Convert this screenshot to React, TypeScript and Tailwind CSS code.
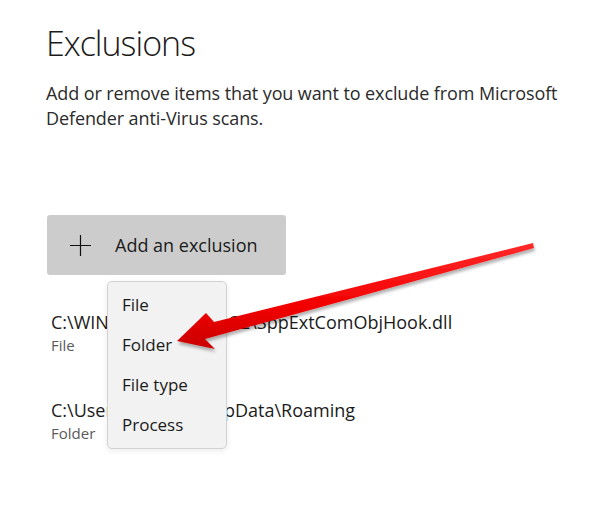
const font = { fontFamily: '"Open Sans", "Noto Sans", sans-serif' };

const exclusions = [
  { path: "C:\\WINDOWS\\System32\\SppExtComObjHook.dll", kind: "File" },
  { path: "C:\\Users\\Mahesh\\AppData\\Roaming", kind: "Folder" },
];

const menuItems = ["File", "Folder", "File type", "Process"];

function RedArrow() {
  return (
    <svg
      className="pointer-events-none absolute left-0 top-0"
      width="596"
      height="510"
      viewBox="0 0 596 510"
    >
      <defs>
        <linearGradient id="shaft" x1="0" y1="0" x2="0" y2="1">
          <stop offset="0" stopColor="#ff2a2a" />
          <stop offset="0.6" stopColor="#f20000" />
          <stop offset="1" stopColor="#c80000" />
        </linearGradient>
        <filter id="shadow" x="-10%" y="-10%" width="120%" height="130%">
          <feDropShadow dx="1" dy="3" stdDeviation="1.5" floodColor="#000" floodOpacity="0.3" />
        </filter>
      </defs>
      <polygon
        points="177,341 206,313 214,322 533,243 534,248 205,339 215,349"
        fill="url(#shaft)"
        filter="url(#shadow)"
      />
    </svg>
  );
}

export default function App() {
  return (
    <div className="relative h-[510px] w-[596px] overflow-hidden bg-white text-[#1b1b1b]" style={font}>
      <div className="pl-[46px] pt-[21px]">
        <h1 className="text-[34px] font-light leading-[44px] tracking-[-1px]">Exclusions</h1>
        <p className="mt-[16px] w-[540px] text-[18px] leading-[25px] tracking-[-0.1px] text-[#2b2b2b]">
          Add or remove items that you want to exclude from Microsoft Defender anti-Virus scans.
        </p>

        <button className="mt-[84px] ml-px flex h-[60px] w-[239px] items-center rounded-[3px] bg-[#cccccc] pl-[23px] text-left">
          <svg width="21" height="21" viewBox="0 0 21 21" className="shrink-0">
            <path d="M10.5 0 V21 M0 10.5 H21" stroke="#111" strokeWidth="1.2" />
          </svg>
          <span className="ml-[24px] text-[18px] text-[#1b1b1b]">Add an exclusion</span>
        </button>

        <div className="mt-[35px] flex flex-col gap-[42px] pl-[5px]">
          {exclusions.map((e) => (
            <div key={e.path} className="flex flex-col">
              <span className="text-[18px] leading-[24px] text-[#1b1b1b]">{e.path}</span>
              <span className="text-[15px] leading-[22px] text-[#5a5a5a]">{e.kind}</span>
            </div>
          ))}
        </div>
      </div>

      <div className="absolute left-[107px] top-[281px] flex w-[120px] flex-col rounded-[5px] border border-[#d2d2d2] bg-[#f2f2f2] py-[3px] shadow-[0_2px_6px_rgba(0,0,0,0.08)]">
        {menuItems.map((m) => (
          <div key={m} className="flex h-[40px] items-center pl-[14px] text-[17px] text-[#1b1b1b]">
            {m}
          </div>
        ))}
      </div>

      <RedArrow />
    </div>
  );
}
